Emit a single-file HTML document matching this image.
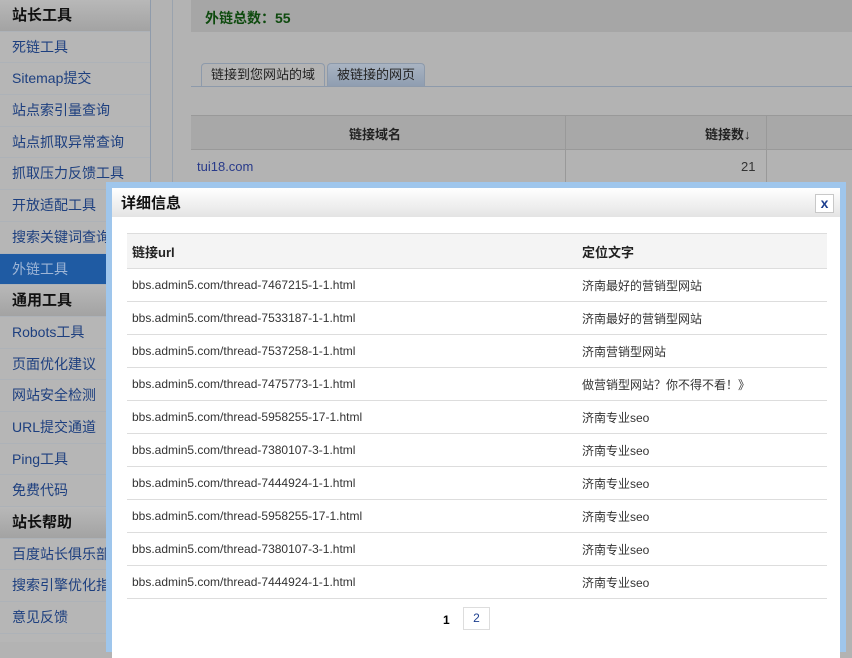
<!DOCTYPE html>
<html><head><meta charset="utf-8"><style>
*{margin:0;padding:0;box-sizing:border-box}
body{width:852px;height:642px;overflow:hidden;background:#b3b3b3;font-family:"Liberation Sans","Noto Sans CJK SC",sans-serif;font-size:14px;position:relative}
.side{position:absolute;left:0;top:0;width:151px;height:642px;background:#b6b6b6;border-right:1px solid #8f9bab}
.side div{height:31.7px;line-height:31px;padding-left:12px;color:#1d3f7f;border-bottom:1px solid #adb2b8}
.side .h{background:linear-gradient(#b8b8b8,#a3a3a3);color:#111;font-weight:bold;font-size:15px}
.side .sel{background:#1f5ba3;color:#9fb6d6}
.vl{position:absolute;left:172px;top:0;width:1px;height:642px;background:#9aa3ae}
.top{position:absolute;left:191px;top:0;width:661px;height:32px;background:#a6a6a6;color:#0e4a0e;font-weight:bold;font-size:14px;padding:8px 0 0 14px}
.tabline{position:absolute;left:191px;top:86px;width:661px;height:1px;background:#8d9aab}
.tab{position:absolute;top:63px;height:24px;border:1px solid #8d9aab;border-bottom:none;border-radius:4px 4px 0 0;font-size:13px;line-height:22px;padding:0 9px;color:#222}
.bg-table{position:absolute;left:191px;top:115px;width:661px}
.mod{position:absolute;left:106px;top:182px;width:740px;height:470px;background:#9fc6ec}
.in{position:absolute;left:6px;top:6px;width:728px;height:470px;background:#fff}
.mh{height:29px;background:linear-gradient(#fff,#e4e4e4);font-weight:bold;font-size:15px;padding:4px 0 0 9px;color:#111}
.x{position:absolute;left:703px;top:6px;width:19px;height:19px;border:1px solid #c8c8c8;background:#fff;color:#1d3f8f;font-weight:bold;font-size:14px;text-align:center;line-height:16px}
table{border-collapse:collapse}
.t{position:absolute;left:15px;top:45px;width:700px;font-size:12px;color:#333}
.t td{height:33px;border-bottom:1px solid #ddd;padding-left:5px}
.t tr.hd td{height:35px;background:#f4f4f4;border-top:1px solid #ddd;font-weight:bold;font-size:13px;color:#222}
.pg{position:absolute;font-size:12px}
</style></head><body>
<div class="side">
<div class="h">站长工具</div><div>死链工具</div><div>Sitemap提交</div><div>站点索引量查询</div><div>站点抓取异常查询</div><div>抓取压力反馈工具</div><div>开放适配工具</div><div>搜索关键词查询</div><div class="sel">外链工具</div>
<div class="h">通用工具</div><div>Robots工具</div><div>页面优化建议</div><div>网站安全检测</div><div>URL提交通道</div><div>Ping工具</div><div>免费代码</div>
<div class="h">站长帮助</div><div>百度站长俱乐部</div><div>搜索引擎优化指南</div><div>意见反馈</div>
</div>
<div class="vl"></div>
<div class="top">外链总数：55</div>
<div class="tab" style="left:201px;background:#b3b3b3">链接到您网站的域</div>
<div class="tab" style="left:327px;background:linear-gradient(#a9b4c2,#8e9db0)">被链接的网页</div>
<div class="tabline"></div>
<div class="bg-table">
<div style="height:35px;background:#a8a8a8;border-top:1px solid #999;border-bottom:1px solid #999;position:relative;font-weight:bold;font-size:13px;color:#222">
<span style="position:absolute;left:158px;top:8px">链接域名</span><span style="position:absolute;left:514px;top:8px">链接数↓</span>
<span style="position:absolute;left:374px;top:0;width:1px;height:68px;background:#999"></span><span style="position:absolute;left:575px;top:0;width:1px;height:68px;background:#999"></span></div>
<div style="height:33px;padding:9px 0 0 6px;font-size:13px;color:#283a8a;position:relative">tui18.com<span style="position:absolute;left:550px;top:9px;color:#333">21</span></div>
</div>
<div class="mod"><div class="in">
<div class="mh">详细信息</div><div class="x">x</div>
<table class="t">
<tr class="hd"><td style="width:450px">链接url</td><td>定位文字</td></tr>
<tr><td>bbs.admin5.com/thread-7467215-1-1.html</td><td>济南最好的营销型网站</td></tr>
<tr><td>bbs.admin5.com/thread-7533187-1-1.html</td><td>济南最好的营销型网站</td></tr>
<tr><td>bbs.admin5.com/thread-7537258-1-1.html</td><td>济南营销型网站</td></tr>
<tr><td>bbs.admin5.com/thread-7475773-1-1.html</td><td>做营销型网站？你不得不看！》</td></tr>
<tr><td>bbs.admin5.com/thread-5958255-17-1.html</td><td>济南专业seo</td></tr>
<tr><td>bbs.admin5.com/thread-7380107-3-1.html</td><td>济南专业seo</td></tr>
<tr><td>bbs.admin5.com/thread-7444924-1-1.html</td><td>济南专业seo</td></tr>
<tr><td>bbs.admin5.com/thread-5958255-17-1.html</td><td>济南专业seo</td></tr>
<tr><td>bbs.admin5.com/thread-7380107-3-1.html</td><td>济南专业seo</td></tr>
<tr><td>bbs.admin5.com/thread-7444924-1-1.html</td><td>济南专业seo</td></tr>
</table>
<span class="pg" style="left:331px;font-weight:bold;top:425px">1</span>
<span class="pg" style="left:351px;top:419px;width:27px;height:23px;border:1px solid #ddd;text-align:center;line-height:21px;color:#1d3f8f">2</span>
</div></div>
</body></html>
